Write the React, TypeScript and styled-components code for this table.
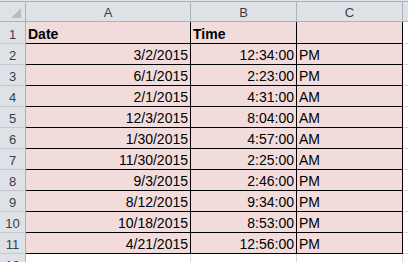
import React from 'react'
import styled, { createGlobalStyle } from 'styled-components'

const GlobalStyle = createGlobalStyle`
	html, body {
		margin: 0;
		padding: 0;
		background: #ffffff;
		overflow: hidden;
	}
`

const HEAD_BG = '#dee2e7'
const HEAD_LINE = '#abb2ba'
const ROW_LINE = '#c3c8ce'
const GRID = '#d9d9d9'

const Sheet = styled.div`
	display: grid;
	grid-template-columns: 26px 165px 106px 106px 1fr;
	grid-auto-rows: 21px;
	grid-template-rows: 21px 22px;
	width: 408px;
	padding-top: 1px;
	background: ${HEAD_BG};
	font-family: 'Liberation Sans', Arial, sans-serif;
	box-sizing: border-box;
`

const Corner = styled.div`
	display: flex;
	justify-content: flex-end;
	align-items: flex-end;
	padding: 0 4px 3px 0;
	background: ${HEAD_BG};
	border-top: 1px solid ${HEAD_LINE};
	border-right: 1px solid ${HEAD_LINE};
	border-bottom: 1px solid ${HEAD_LINE};
`

const ColHead = styled.div<{ $last?: boolean }>`
	display: flex;
	justify-content: center;
	align-items: flex-end;
	padding-bottom: 1px;
	background: ${HEAD_BG};
	border-top: 1px solid ${HEAD_LINE};
	border-bottom: 1px solid ${HEAD_LINE};
	border-right: ${(p) => (p.$last ? 'none' : `1px solid ${HEAD_LINE}`)};
	color: #3b3f45;
	font-size: 13px;
	line-height: 15px;
`

const RowHead = styled.div`
	display: flex;
	justify-content: center;
	align-items: flex-end;
	padding-bottom: 1px;
	background: ${HEAD_BG};
	border-right: 1px solid ${HEAD_LINE};
	border-bottom: 1px solid ${ROW_LINE};
	color: #34404d;
	font-size: 13px;
	line-height: 15px;
`

const Cell = styled.div<{ $align?: 'left' | 'right'; $bold?: boolean; $filled?: boolean; $edge?: 'ink' | 'grid' | 'open' }>`
	display: flex;
	align-items: flex-end;
	justify-content: ${(p) => (p.$align === 'right' ? 'flex-end' : 'flex-start')};
	padding: 0 2px 1px 2px;
	background: ${(p) => (p.$filled ? '#f2dcdb' : '#ffffff')};
	border-bottom: 1px solid ${(p) => (p.$edge === 'ink' ? '#000000' : GRID)};
	border-right: ${(p) => (p.$edge === 'open' ? 'none' : `1px solid ${p.$edge === 'ink' ? '#000000' : GRID}`)};
	color: #000000;
	font-size: 14px;
	font-weight: ${(p) => (p.$bold ? 700 : 400)};
	line-height: 15px;
	white-space: nowrap;
	overflow: hidden;
`

const rows: [string, string, string][] = [
	['3/2/2015', '12:34:00', 'PM'],
	['6/1/2015', '2:23:00', 'PM'],
	['2/1/2015', '4:31:00', 'AM'],
	['12/3/2015', '8:04:00', 'AM'],
	['1/30/2015', '4:57:00', 'AM'],
	['11/30/2015', '2:25:00', 'AM'],
	['9/3/2015', '2:46:00', 'PM'],
	['8/12/2015', '9:34:00', 'PM'],
	['10/18/2015', '8:53:00', 'PM'],
	['4/21/2015', '12:56:00', 'PM'],
]

export default function App() {
	return (
		<>
			<GlobalStyle />
			<Sheet>
				<Corner>
					<svg width="10" height="10" viewBox="0 0 10 10">
						<polygon points="10,0 10,10 0,10" fill="#b7bcc2" />
					</svg>
				</Corner>
				<ColHead>A</ColHead>
				<ColHead>B</ColHead>
				<ColHead>C</ColHead>
				<ColHead $last />

				<RowHead>1</RowHead>
				<Cell $filled $bold $edge="ink">Date</Cell>
				<Cell $filled $bold $edge="ink">Time</Cell>
				<Cell $filled $edge="ink" />
				<Cell $edge="open" />

				{rows.map(([date, time, period], i) => (
					<React.Fragment key={date}>
						<RowHead>{i + 2}</RowHead>
						<Cell $filled $align="right" $edge="ink">{date}</Cell>
						<Cell $filled $align="right" $edge="ink">{time}</Cell>
						<Cell $filled $edge="ink">{period}</Cell>
						<Cell $edge="open" />
					</React.Fragment>
				))}

				<RowHead>12</RowHead>
				<Cell $edge="grid" />
				<Cell $edge="grid" />
				<Cell $edge="grid" />
				<Cell $edge="open" />
			</Sheet>
		</>
	)
}
